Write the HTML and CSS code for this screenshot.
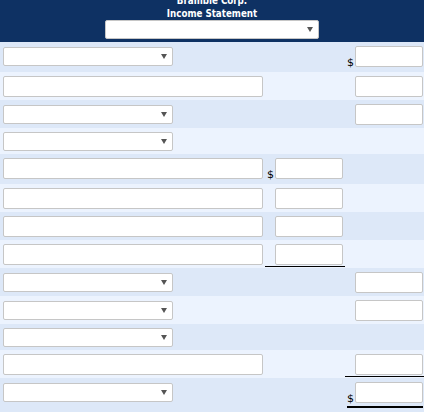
FILE: index.html
```html
<!DOCTYPE html>
<html lang="en">
<head>
<meta charset="utf-8">
<title>Income Statement</title>
<link rel="stylesheet" href="styles.css">
</head>
<body>
<div class="sheet">
  <div class="head">
    <div class="title">Bramble Corp.<br>Income Statement</div>
    <span class="sel sel-head"><select></select></span>
  </div>

  <div class="row dark tall">
    <div class="c-left"><span class="sel"><select></select></span></div>
    <div class="c-mid"></div>
    <div class="c-right"><span class="dol">$</span><input type="text"></div>
  </div>
  <div class="row light">
    <div class="c-left"><input type="text" class="wide"></div>
    <div class="c-mid"></div>
    <div class="c-right"><input type="text"></div>
  </div>
  <div class="row dark">
    <div class="c-left"><span class="sel"><select></select></span></div>
    <div class="c-mid"></div>
    <div class="c-right"><input type="text"></div>
  </div>
  <div class="row light">
    <div class="c-left"><span class="sel"><select></select></span></div>
    <div class="c-mid"></div>
    <div class="c-right"></div>
  </div>
  <div class="row dark tall">
    <div class="c-left"><input type="text" class="wide"></div>
    <div class="c-mid"><span class="dol">$</span><input type="text"></div>
    <div class="c-right"></div>
  </div>
  <div class="row light">
    <div class="c-left"><input type="text" class="wide"></div>
    <div class="c-mid"><input type="text"></div>
    <div class="c-right"></div>
  </div>
  <div class="row dark">
    <div class="c-left"><input type="text" class="wide"></div>
    <div class="c-mid"><input type="text"></div>
    <div class="c-right"></div>
  </div>
  <div class="row light">
    <div class="c-left"><input type="text" class="wide"></div>
    <div class="c-mid ul"><input type="text"></div>
    <div class="c-right"></div>
  </div>
  <div class="row dark">
    <div class="c-left"><span class="sel"><select></select></span></div>
    <div class="c-mid"></div>
    <div class="c-right"><input type="text"></div>
  </div>
  <div class="row light">
    <div class="c-left"><span class="sel"><select></select></span></div>
    <div class="c-mid"></div>
    <div class="c-right"><input type="text"></div>
  </div>
  <div class="row dark">
    <div class="c-left"><span class="sel"><select></select></span></div>
    <div class="c-mid"></div>
    <div class="c-right"></div>
  </div>
  <div class="row light">
    <div class="c-left"><input type="text" class="wide"></div>
    <div class="c-mid"></div>
    <div class="c-right ul"><input type="text"></div>
  </div>
  <div class="row dark last">
    <div class="c-left"><span class="sel"><select></select></span></div>
    <div class="c-mid"></div>
    <div class="c-right dul"><span class="dol">$</span><input type="text"></div>
  </div>
</div>
</body>
</html>
```

FILE: styles.css
```css
html, body {
  margin: 0;
  padding: 0;
  background: #dde8f8;
}

.sheet {
  width: 424px;
  font-family: "DejaVu Sans", Verdana, sans-serif;
  font-size: 10px;
  color: #000;
}

.head {
  background: #0e3163;
  color: #fff;
  text-align: center;
  padding-bottom: 3px;
  display: flex;
  flex-direction: column;
  align-items: center;
}

.title {
  font-family: "DejaVu Sans Condensed", "DejaVu Sans", sans-serif;
  font-weight: bold;
  font-size: 9.7px;
  line-height: 13px;
  margin-top: -6px;
  margin-bottom: 0;
}

.sel {
  position: relative;
  display: block;
  width: 170px;
  height: 19px;
}

.sel select {
  appearance: none;
  -webkit-appearance: none;
  display: block;
  width: 100%;
  height: 100%;
  margin: 0;
  padding: 0;
  box-sizing: border-box;
  border: 1px solid #c6c6c6;
  border-radius: 2px;
  background: #fff;
}

.sel::after {
  content: "";
  position: absolute;
  right: 6px;
  top: 7px;
  width: 0;
  height: 0;
  border-left: 3px solid transparent;
  border-right: 3px solid transparent;
  border-top: 5px solid #555;
  pointer-events: none;
}

.sel-head {
  width: 214px;
}

input[type="text"] {
  display: block;
  width: 68px;
  height: 21px;
  margin: 0;
  padding: 0;
  box-sizing: border-box;
  border: 1px solid #c6c6c6;
  border-radius: 2px;
  background: #fff;
}

input.wide {
  width: 260px;
}

.row {
  display: grid;
  grid-template-columns: 265px 80px 79px;
  align-items: center;
  padding: 4px 0 3px;
}

.row.tall {
  padding-bottom: 5px;
}

.row.last {
  padding-bottom: 8px;
}

.dark {
  background: #dde8f8;
}

.light {
  background: #ecf3fe;
}

.c-left {
  padding-left: 3px;
}

.c-mid,
.c-right {
  display: flex;
  justify-content: flex-end;
  align-items: flex-end;
}

.c-mid {
  padding-right: 2px;
}

.c-right {
  padding-right: 1px;
}

.dol {
  font-size: 11px;
  line-height: 10px;
  margin-right: 1px;
  margin-bottom: -1px;
}

.ul {
  border-bottom: 1px solid #000;
  padding-bottom: 1px;
  margin-bottom: -2px;
}

.c-right.ul {
  padding-right: 1px;
}

.dul {
  border-bottom: 2px solid #000;
  padding-bottom: 3px;
  margin: 0 1px -5px 2px;
  padding-right: 0;
}
```
